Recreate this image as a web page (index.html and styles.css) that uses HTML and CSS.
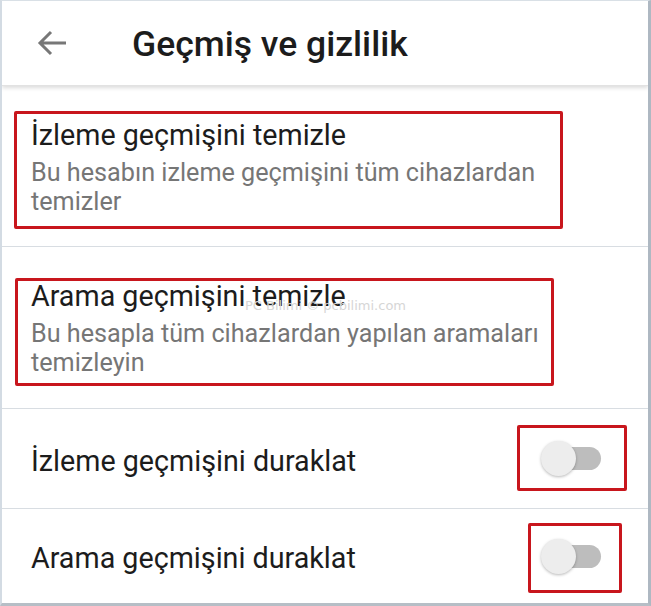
FILE: index.html
```html
<!DOCTYPE html>
<html lang="tr">
<head>
<meta charset="utf-8">
<title>Geçmiş ve gizlilik</title>
<link rel="stylesheet" href="styles.css">
</head>
<body>
<div class="frame">
  <header class="appbar">
    <svg class="back" width="30" height="26" viewBox="0 0 30 26" aria-hidden="true">
      <path d="M29 13H3M14 2L3 13l11 11" fill="none" stroke="#777" stroke-width="3" stroke-linecap="butt" stroke-linejoin="miter"/>
    </svg>
    <h1 class="title">Geçmiş ve gizlilik</h1>
  </header>
  <main class="list">
    <section class="item item-text first">
      <div class="item-title">İzleme geçmişini temizle</div>
      <div class="item-sub">Bu hesabın izleme geçmişini tüm cihazlardan temizler</div>
      <span class="mark mark-1"></span>
    </section>
    <section class="item item-text second">
      <div class="item-title">Arama geçmişini temizle</div>
      <div class="item-sub">Bu hesapla tüm cihazlardan yapılan aramaları temizleyin</div>
      <span class="watermark">PC Bilimi © pcbilimi.com</span>
      <span class="mark mark-2"></span>
    </section>
    <section class="item item-switch">
      <div class="item-title">İzleme geçmişini duraklat</div>
      <div class="switch"><span class="thumb"></span><span class="track"></span></div>
      <span class="mark mark-3"></span>
    </section>
    <section class="item item-switch last">
      <div class="item-title">Arama geçmişini duraklat</div>
      <div class="switch"><span class="thumb"></span><span class="track"></span></div>
      <span class="mark mark-4"></span>
    </section>
  </main>
</div>
</body>
</html>
```
FILE: styles.css
```css
* { box-sizing: border-box; }
html, body { margin: 0; padding: 0; background: #fff; }
body { font-family: Roboto, "Noto Sans", sans-serif; color: #1b1b1b; }

.frame {
  width: 651px;
  height: 606px;
  border-top: 1px solid #d9e0e6;
  border-left: 2px solid #d3dbe3;
  border-right: 3px solid #aeb8c2;
  border-bottom: 3px solid #b6bec6;
  display: flex;
  flex-direction: column;
  overflow: hidden;
}

.appbar {
  height: 85px;
  flex: none;
  display: flex;
  align-items: center;
  padding-left: 35px;
  background: #fff;
  border-bottom: 1px solid #e2e2e2;
  box-shadow: 0 2px 4px rgba(0,0,0,0.14);
  position: relative;
  z-index: 1;
}
.back { flex: none; margin-top: -1px; }
.title {
  margin: 2px 0 0 65px;
  font-size: 35.5px;
  font-weight: 500;
  line-height: 42px;
  color: #1c1c1c;
}

.list { flex: 1; display: flex; flex-direction: column; }

.item { position: relative; border-bottom: 1px solid #d8dde2; flex: none; }
.item-text { padding: 32px 30px 30px 29px; }
.item-text.second { padding-bottom: 31px; }
.item-title { font-size: 28.7px; line-height: 34px; color: #1c1c1c; white-space: nowrap; }
.item-sub { margin-top: 6px; font-size: 25.2px; line-height: 29px; color: #767676; max-width: 530px; }

.item-switch {
  height: 100px;
  display: flex;
  align-items: center;
  justify-content: space-between;
  padding: 0 47px 0 29px;
}
.item-switch .item-title { margin-top: 4px; }
.item-switch.last { flex: 1; border-bottom: 0; }

.switch { display: flex; align-items: center; }
.thumb {
  width: 35px; height: 35px; border-radius: 50%;
  background: #ededed;
  box-shadow: 0 1px 3px rgba(0,0,0,0.28);
  position: relative; z-index: 1;
}
.track {
  width: 53px; height: 23px; border-radius: 12px;
  background: #bdbdbd;
  margin-left: -28px;
}

.mark { position: absolute; border: 3px solid #c8161d; border-radius: 2px; }
.mark-1 { left: 12px; top: 25px; width: 549px; height: 118px; }
.mark-2 { left: 13px; top: 31px; width: 539px; height: 108px; }
.mark-3 { left: 515px; top: 16px; width: 110px; height: 66px; }
.mark-4 { left: 526px; top: 14px; width: 94px; height: 70px; }

.watermark {
  position: absolute; left: 243px; top: 51px;
  font-family: "DejaVu Sans", sans-serif;
  font-size: 13px; line-height: 15px; color: #d6d6d6; white-space: nowrap;
}
```
